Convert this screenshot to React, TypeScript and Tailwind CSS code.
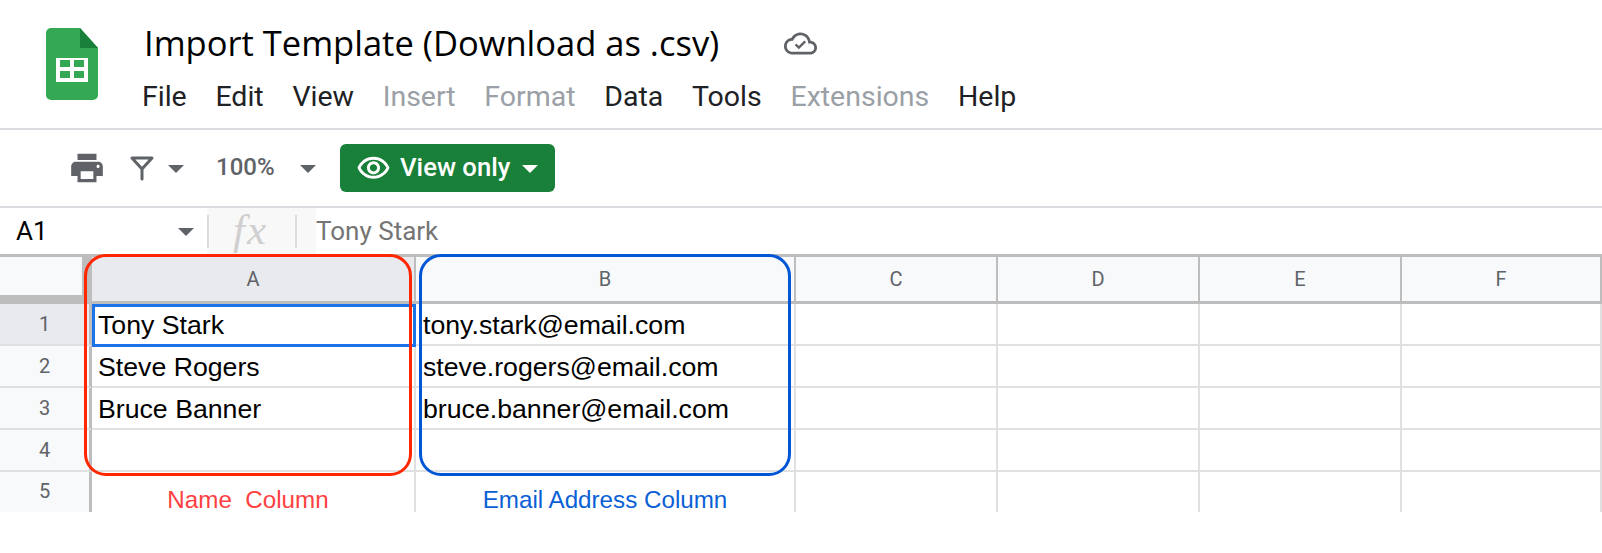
const roboto = "font-['Roboto',sans-serif]"

const menus = [
  { label: "File", dim: false },
  { label: "Edit", dim: false },
  { label: "View", dim: false },
  { label: "Insert", dim: true },
  { label: "Format", dim: true },
  { label: "Data", dim: false },
  { label: "Tools", dim: false },
  { label: "Extensions", dim: true },
  { label: "Help", dim: false },
]

const columns = ["A", "B", "C", "D", "E", "F"]
const widths = ["w-[324px]", "w-[380px]", "w-[202px]", "w-[202px]", "w-[202px]", "w-[200px]"]

const rows = [
  { n: 1, name: "Tony Stark", email: "tony.stark@email.com" },
  { n: 2, name: "Steve Rogers", email: "steve.rogers@email.com" },
  { n: 3, name: "Bruce Banner", email: "bruce.banner@email.com" },
  { n: 4, name: "", email: "" },
]

function Caret({ className = "" }: { className?: string }) {
  return (
    <svg width="16" height="8" viewBox="0 0 16 8" className={className}>
      <path d="M0 0h16L8 8z" fill="currentColor" />
    </svg>
  )
}

function SheetsLogo() {
  return (
    <svg width="52" height="72" viewBox="0 0 52 72" className="shrink-0">
      <path d="M5 0h29l18 20v47a5 5 0 0 1-5 5H5a5 5 0 0 1-5-5V5a5 5 0 0 1 5-5z" fill="#34a853" />
      <path d="M34 0l18 20H34z" fill="#188038" />
      <path d="M10 30h32v24H10z" fill="#fff" />
      <path d="M14 32h10v7H14zM28 32h10v7H28zM14 43h10v7H14zM28 43h10v7H28z" fill="#34a853" />
    </svg>
  )
}

function CloudDone() {
  return (
    <svg width="33" height="33" viewBox="0 0 24 24" className="ml-[65px] mt-[1px] text-[#5f6368]" fill="currentColor">
      <path d="M19.35 10.04C18.67 6.59 15.64 4 12 4 9.11 4 6.6 5.64 5.35 8.04 2.34 8.36 0 10.91 0 14c0 3.31 2.69 6 6 6h13c2.76 0 5-2.24 5-5 0-2.64-2.05-4.78-4.65-4.96zM19 18H6c-2.21 0-4-1.79-4-4 0-2.05 1.53-3.76 3.56-3.97l1.07-.11.5-.95C8.08 7.14 9.94 6 12 6c2.62 0 4.88 1.86 5.39 4.43l.3 1.5 1.53.11c1.56.1 2.78 1.41 2.78 2.96 0 1.65-1.35 3-3 3z" />
      <path d="M8.4 12.6l2.4 2.4 4.6-4.6" fill="none" stroke="currentColor" strokeWidth="1.7" />
    </svg>
  )
}

function Toolbar() {
  return (
    <div className="flex h-[78px] items-center border-b-2 border-[#dadce0] pl-[68px] text-[#5f6368]">
      <svg width="38" height="38" viewBox="0 0 24 24" fill="currentColor">
        <path d="M19 8H5c-1.66 0-3 1.34-3 3v6h4v4h12v-4h4v-6c0-1.66-1.34-3-3-3zm-3 11H8v-5h8v5zm3-7c-.55 0-1-.45-1-1s.45-1 1-1 1 .45 1 1-.45 1-1 1zm-1-9H6v4h12V3z" />
      </svg>
      <svg width="24" height="25" viewBox="0 0 24 25" fill="none" stroke="currentColor" strokeWidth="3" strokeLinejoin="round" className="ml-[24px]">
        <path d="M2 2h20l-10 11zM12 13v10" strokeLinecap="round" />
      </svg>
      <Caret className="ml-[14px] mt-[2px]" />
      <span className={`${roboto} -mt-[2px] ml-[32px] w-[58px] text-[24px] font-medium`}>100%</span>
      <Caret className="ml-[26px] mt-[2px]" />
      <div className={`${roboto} ml-[24px] flex h-[48px] w-[215px] items-center rounded-md bg-[#188038] pl-[16px] text-white`}>
        <svg width="35" height="35" viewBox="0 0 24 24" fill="currentColor">
          <path d="M12 6c3.79 0 7.17 2.13 8.82 5.5C19.17 14.87 15.79 17 12 17s-7.17-2.13-8.82-5.5C4.83 8.13 8.21 6 12 6m0-2C7 4 2.73 7.11 1 11.5 2.73 15.89 7 19 12 19s9.27-3.11 11-7.5C21.27 7.11 17 4 12 4zm0 5c1.38 0 2.5 1.12 2.5 2.5S13.38 14 12 14s-2.5-1.12-2.5-2.5S10.62 9 12 9m0-2c-2.48 0-4.5 2.02-4.5 4.5S9.52 16 12 16s4.5-2.02 4.5-4.5S14.48 7 12 7z" />
        </svg>
        <span className="-mt-[2px] ml-[9px] text-[25.7px] font-medium">View only</span>
        <Caret className="ml-[12px] mt-[2px]" />
      </div>
    </div>
  )
}

function FormulaBar() {
  return (
    <div className={`${roboto} flex h-[46px] items-center`}>
      <span className="ml-[16px] w-[162px] text-[26px] text-black">A1</span>
      <Caret className="mt-[2px] text-[#5f6368]" />
      <div className="ml-[13px] flex h-full w-[109px] items-center bg-[#f8f8f8]">
        <div className="h-[33px] w-[2px] bg-[#dadce0]" />
        <span className="-mt-[4px] ml-[24px] w-[62px] font-['Liberation_Serif',serif] text-[43px] italic leading-none tracking-[2px] text-[#cfcfcf]">fx</span>
        <div className="h-[33px] w-[2px] bg-[#dadce0]" />
      </div>
      <span className="text-[26px] text-[#757575]">Tony Stark</span>
    </div>
  )
}

function Sheet() {
  return (
    <div className="relative border-t-[3px] border-[#bdbdbd]">
      {/* header row */}
      <div className="flex h-[47px]">
        <div className="w-[92px] shrink-0 border-r-[10px] border-b-[9px] border-[#bdbdbd] bg-[#f8f9fa]" />
        {columns.map((c, i) => (
          <div
            key={c}
            className={`${widths[i]} ${roboto} flex shrink-0 items-center justify-center border-r-2 border-b-[3px] border-[#bdbdbd] text-[20px] text-[#5f6368] ${i === 0 ? "bg-[#e8eaed]" : "bg-[#f8f9fa]"}`}
          >
            {c}
          </div>
        ))}
      </div>
      {/* body */}
      {rows.map((r) => (
        <div key={r.n} className="flex h-[42px]">
          <div className={`${roboto} flex w-[92px] shrink-0 items-center justify-center border-r-[3px] border-b-2 border-[#bdbdbd] border-b-[#e0e0e0] text-[20px] text-[#5f6368] ${r.n === 1 ? "bg-[#e8eaed]" : "bg-[#f8f9fa]"}`}>
            {r.n}
          </div>
          {widths.map((w, i) => (
            <div
              key={i}
              className={`${w} flex shrink-0 items-center border-r-2 border-b-2 border-[#e0e0e0] pt-[2px] font-['Liberation_Sans',sans-serif] text-[26.7px] text-black ${i === 0 ? "pl-[6px]" : "pl-[7px]"}`}
            >
              {i === 0 ? r.name : i === 1 ? r.email : ""}
            </div>
          ))}
        </div>
      ))}
      {/* row 5, cut off at the bottom of the capture */}
      <div className="flex h-[40px] overflow-hidden">
        <div className={`${roboto} flex w-[92px] shrink-0 items-start justify-center border-r-[3px] border-[#bdbdbd] bg-[#f8f9fa] pt-[4px] text-[20px] text-[#5f6368]`}>
          5
        </div>
        {widths.map((w, i) => (
          <div
            key={i}
            className={`${w} flex shrink-0 items-end justify-center border-r-2 border-[#e0e0e0] font-['Liberation_Sans',sans-serif] text-[24.2px] leading-[24px] ${i === 0 ? "pr-[10px] text-[#ff4040]" : "text-[#0a5fd6]"}`}
          >
            {i === 0 ? "Name\u00a0 Column" : i === 1 ? "Email Address Column" : ""}
          </div>
        ))}
      </div>
      {/* selected cell */}
      <div className="absolute top-[47px] left-[92px] h-[43px] w-[324px] border-[3px] border-[#1a73e8]" />
      {/* highlight boxes drawn over the sheet */}
      <div className="absolute top-[-3px] left-[84px] h-[222px] w-[328px] rounded-[22px] border-[3px] border-[#ff2600]" />
      <div className="absolute top-[-3px] left-[419px] h-[222px] w-[372px] rounded-[22px] border-[3px] border-[#0056d6]" />
    </div>
  )
}

export default function App() {
  return (
    <div className="h-[553px] w-[1602px] overflow-hidden bg-white">
      <div className="flex h-[130px] border-b-2 border-[#dadce0] pt-[28px] pl-[46px]">
        <SheetsLogo />
        <div className="ml-[45px]">
          <div className="flex h-[30px] items-center pl-[1px]">
            <span className="font-['Open_Sans',sans-serif] text-[34.5px] leading-none text-black">Import Template (Download as .csv)</span>
            <CloudDone />
          </div>
          <div className={`${roboto} mt-[21px] -ml-[1px] flex gap-[28.7px] text-[28.5px] leading-[36px]`}>
            {menus.map((m) => (
              <span key={m.label} className={m.dim ? "text-[#9aa0a6]" : "text-[#202124]"}>
                {m.label}
              </span>
            ))}
          </div>
        </div>
      </div>
      <Toolbar />
      <FormulaBar />
      <Sheet />
    </div>
  )
}
